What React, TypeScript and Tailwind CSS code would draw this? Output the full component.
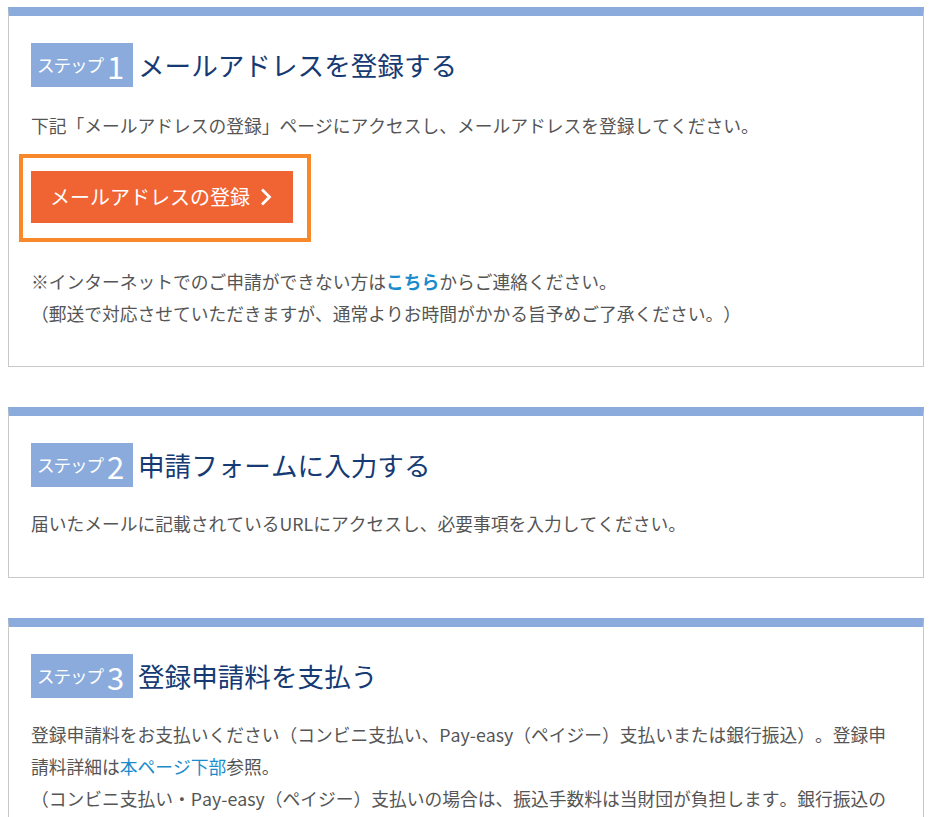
const font = { fontFamily: '"Noto Sans CJK JP", "Noto Sans", sans-serif' };

function StepHeading({ n, title }: { n: number; title: string }) {
  return (
    <div className="flex items-center gap-[5px]">
      <div className="flex h-[44px] w-[102px] items-center bg-[#8aabdc] pl-[6px] text-white">
        <span className="text-[17.5px] tracking-[-1px]">ステップ</span>
        <span className="ml-[4px] text-[31px] leading-none">{n}</span>
      </div>
      <h2 className="text-[26.6px] text-[#153a74]">{title}</h2>
    </div>
  );
}

function Card({ children }: { children: React.ReactNode }) {
  return (
    <section className="w-[916px] border border-t-[9px] border-[#c9c9c9] border-t-[#8aabdc] bg-white px-[22px] pt-[27px]">
      {children}
    </section>
  );
}

export default function App() {
  return (
    <div
      className="min-h-screen bg-white pt-[7px] pl-2 text-[17.75px] leading-[32px] text-[#555] [font-kerning:none] [text-spacing-trim:space-all]"
      style={font}
    >
      <div className="flex flex-col gap-10">
        <Card>
          <StepHeading n={1} title="メールアドレスを登録する" />
          <p className="mt-[22px]">
            下記「メールアドレスの登録」ページにアクセスし、メールアドレスを登録してください。
          </p>
          <div className="mt-[13px] -ml-[12px] inline-block border-4 border-[#f7892a] pt-[13px] pr-[14px] pb-[15px] pl-[8px]">
            <a className="flex h-[52px] w-[262px] items-center bg-[#f06434] pl-[19px] text-[20px] text-white">
              メールアドレスの登録
              <svg className="ml-[9px]" width="13" height="20" viewBox="0 0 13 20" fill="none">
                <path d="M3 2.5l7.5 7.5-7.5 7.5" stroke="white" strokeWidth="2.8" />
              </svg>
            </a>
          </div>
          <p className="mt-[23px] pb-[37px]">
            ※インターネットでのご申請ができない方は
            <a className="font-bold text-[#1a8ccc]">こちら</a>
            からご連絡ください。
            <br />
            （郵送で対応させていただきますが、通常よりお時間がかかる旨予めご了承ください。）
          </p>
        </Card>
        <Card>
          <StepHeading n={2} title="申請フォームに入力する" />
          <p className="mt-[20px] pb-[38px]">
            届いたメールに記載されているURLにアクセスし、必要事項を入力してください。
          </p>
        </Card>
        <Card>
          <StepHeading n={3} title="登録申請料を支払う" />
          <p className="mt-[20px] pb-[39px]">
            登録申請料をお支払いください（コンビニ支払い、Pay-easy（ペイジー）支払いまたは銀行振込）。登録申
            <br />
            請料詳細は<a className="text-[#1a8ccc]">本ページ下部</a>参照。
            <br />
            （コンビニ支払い・Pay-easy（ペイジー）支払いの場合は、振込手数料は当財団が負担します。銀行振込の
            <br />
            場合は、振込手数料はご負担いただきます。）
          </p>
        </Card>
      </div>
    </div>
  );
}
